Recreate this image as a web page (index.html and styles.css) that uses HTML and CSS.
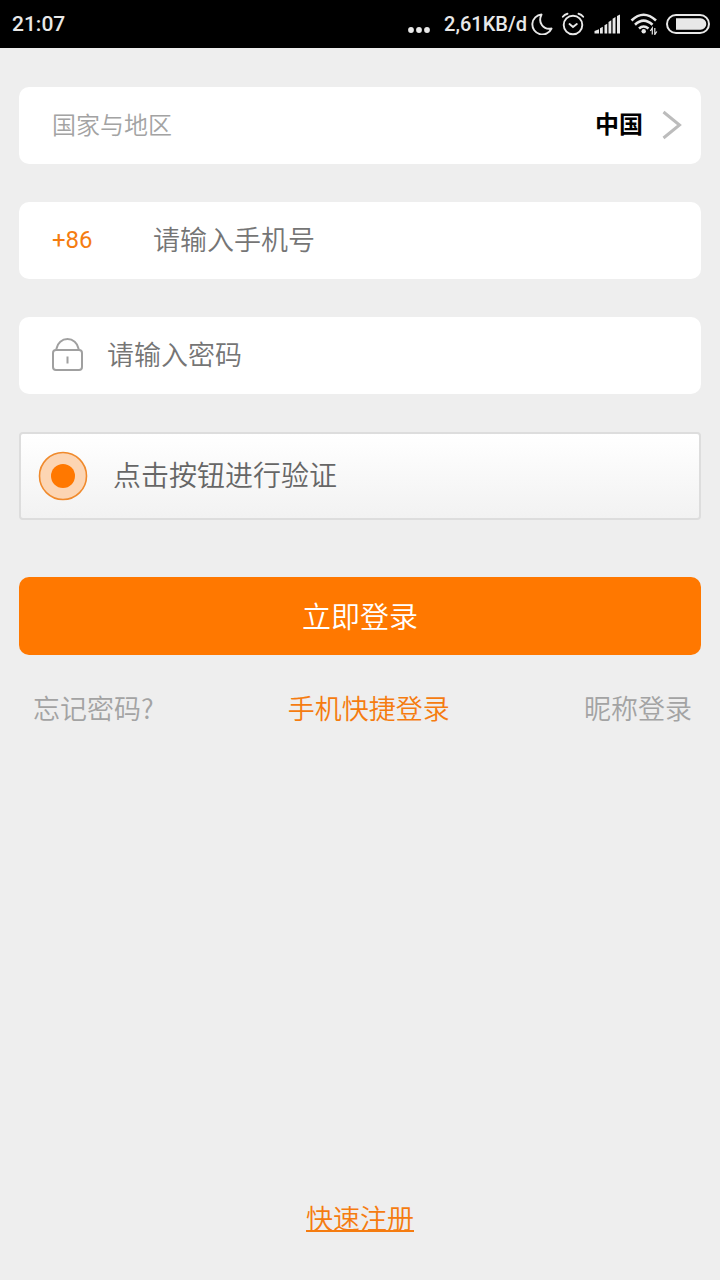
FILE: index.html
```html
<!DOCTYPE html>
<html lang="zh-CN">
<head>
<meta charset="utf-8">
<meta name="viewport" content="width=device-width, initial-scale=1">
<title>登录</title>
<link rel="stylesheet" href="styles.css">
</head>
<body>
<div class="screen">
  <header class="status-bar">
    <span class="clock">21:07</span>
    <div class="status-icons">
      <svg class="dots" width="24" height="8" viewBox="0 0 24 8" fill="#e8e8e8"><circle cx="4" cy="4" r="2.9"/><circle cx="12" cy="4" r="2.9"/><circle cx="20" cy="4" r="2.9"/></svg>
      <span class="traffic">2,61KB/d</span>
      <svg class="moon" width="22" height="22" viewBox="0 0 22 22" fill="none" stroke="#e8e8e8" stroke-width="1.9" stroke-linejoin="round"><path d="M10.500 1.500A10 10 0 1 0 20.500 15.500C12.500 17 6.500 10 10.500 1.500Z"/></svg>
      <svg class="alarm" width="24" height="24" viewBox="0 0 24 24" fill="none" stroke="#e8e8e8" stroke-width="1.900" stroke-linecap="round"><circle cx="12" cy="13" r="9.300"/><path d="M8.500 12L12 15L15.800 12M1.800 4.800Q3.500 2.500 6.500 1.800M22.200 4.800Q20.500 2.500 17.500 1.800"/></svg>
      <svg class="signal" width="27" height="20" viewBox="0 0 27 20" fill="#e8e8e8"><path d="M0.500 19.500V17L5 15.200V19.500ZM6 19.500V14.300L8.800 12.800V19.500ZM10.500 19.500V11.300L13.200 9.800V19.500ZM14.500 19.500V8L17.300 6.200V19.500ZM18.600 19.500V4.800L21.500 3V19.500ZM23 19.500V2L26 0.500V19.500Z"/></svg>
      <svg class="wifi" width="28" height="22" viewBox="0 0 28 22" fill="none" stroke="#e8e8e8" stroke-width="2.600"><path d="M1.500 7.500Q13.500 -4 26 7.500M5 11.800Q13.500 3.500 22.500 11.800M9 15.500Q13.500 11.500 18.500 15.500"/><circle cx="13.700" cy="18.300" r="2.200" fill="#e8e8e8" stroke="none"/><path d="M22.300 21.500V15L20.300 18M24.800 15V21.500L26.800 18.500" stroke-width="1.200"/></svg>
      <svg class="battery" width="44" height="20" viewBox="0 0 44 20"><rect x="1" y="1" width="42" height="18" rx="9" fill="none" stroke="#e8e8e8" stroke-width="2"/><path d="M10 4.200H34.500A5.800 5.800 0 0 1 34.500 15.800H10Z" fill="#e8e8e8"/></svg>
    </div>
  </header>

  <main class="content">
    <form class="login-form">
      <button class="field region" type="button">
        <span class="region-label">国家与地区</span>
        <span class="region-value">中国</span>
        <svg class="chevron" width="20" height="30" viewBox="0 0 20 30" fill="none" stroke="#bcbcbc" stroke-width="3"><path d="M1.500 2L17.500 15L1.500 28"/></svg>
      </button>
      <div class="field">
        <label class="dial-code" for="phone">+86</label>
        <input class="entry" id="phone" type="tel" placeholder="请输入手机号">
      </div>
      <div class="field">
        <label class="lock" for="password" aria-label="密码">
          <svg width="32" height="34" viewBox="0 0 32 34" fill="none" stroke="#a0a0a0" stroke-width="2"><rect x="1" y="12" width="29" height="20" rx="3"/><path d="M4.500 12V10.500C5.500 5 10 1 15.500 1S25.500 5 26.500 10.500V12M15.500 18.500V25.500"/></svg>
        </label>
        <input class="entry" id="password" type="password" placeholder="请输入密码">
      </div>
      <button class="verify" type="button">
        <svg width="50" height="50" viewBox="0 0 50 50"><circle cx="25" cy="25" r="23.500" fill="#fcd5b3" stroke="#f08a2c" stroke-width="1.600"/><circle cx="25" cy="25" r="12" fill="#ff7800"/></svg>
        <span class="verify-text">点击按钮进行验证</span>
      </button>
      <button class="submit" type="submit">立即登录</button>
    </form>
    <nav class="links">
      <a class="link" href="#forgot">忘记密码?</a>
      <a class="link accent" href="#quick">手机快捷登录</a>
      <a class="link" href="#nickname">昵称登录</a>
    </nav>
    <a class="link accent register" href="#register">快速注册</a>
  </main>
</div>
</body>
</html>
```
FILE: styles.css
```css
* {
  box-sizing: border-box;
}

body {
  margin: 0;
  background: #eeeeee;
  font-family: Roboto, "Noto Sans CJK SC", sans-serif;
  font-weight: 350;
}

button,
input {
  font: inherit;
}

.screen {
  display: flex;
  flex-direction: column;
  min-height: 100vh;
}

.status-bar {
  display: flex;
  align-items: center;
  justify-content: space-between;
  height: 48px;
  padding: 0 10px 0 12px;
  background: #000000;
  color: #e8e8e8;
  font-size: 21px;
  font-weight: 500;
}

.status-icons {
  display: flex;
  align-items: center;
}

.dots {
  margin: 12px 13px 0 0;
}

.traffic {
  margin-right: 4px;
  font-size: 20px;
}

.moon {
  margin-right: 8px;
}

.alarm {
  margin-right: 9px;
}

.signal {
  margin-right: 9px;
}

.wifi {
  margin-right: 8px;
}

.content {
  display: flex;
  flex: 1;
  flex-direction: column;
  padding: 39px 19px 42px;
}

.login-form {
  display: flex;
  flex-direction: column;
}

.field {
  display: flex;
  align-items: center;
  width: 100%;
  height: 77px;
  margin: 0 0 38px;
  padding: 0 19px 2px 33px;
  border: 0;
  border-radius: 10px;
  background: #ffffff;
}

.region-label {
  flex: 1;
  padding-bottom: 2px;
  color: #a3a3a3;
  font-size: 24px;
  text-align: left;
}

.region-value {
  margin-right: 19px;
  padding-bottom: 4px;
  color: #000000;
  font-size: 24px;
  font-weight: 700;
}

.dial-code {
  width: 101px;
  color: #f57c10;
  font-size: 24px;
  font-weight: 400;
}

.lock {
  display: flex;
  width: 55px;
}

.entry {
  flex: 1;
  min-width: 0;
  padding: 2px 0 0;
  border: 0;
  outline: 0;
  background: transparent;
  color: #333333;
  font-size: 27px;
}

.entry::placeholder {
  color: #757575;
  opacity: 1;
}

.verify {
  display: flex;
  align-items: center;
  gap: 25px;
  height: 88px;
  margin: 0 0 57px;
  padding: 0 17px;
  border: 2px solid #dddddd;
  border-radius: 4px;
  background: linear-gradient(#ffffff, #f2f2f2);
  color: #666666;
  font-size: 28px;
}

.verify-text {
  padding-bottom: 4px;
}

.submit {
  height: 78px;
  margin: 0;
  padding: 0 0 2px;
  border: 0;
  border-radius: 10px;
  background: #ff7800;
  color: #ffffff;
  font-size: 29px;
}

.links {
  display: flex;
  justify-content: space-between;
  margin-top: 33px;
  padding: 0 9px 0 14px;
}

.link {
  color: #a3a3a3;
  font-family: "Noto Sans CJK SC", sans-serif;
  font-size: 27px;
  line-height: 40px;
  text-decoration: none;
}

.accent {
  color: #f57c10;
}

.register {
  align-self: center;
  margin-top: auto;
  text-decoration: underline;
  text-decoration-thickness: 2px;
}
```
